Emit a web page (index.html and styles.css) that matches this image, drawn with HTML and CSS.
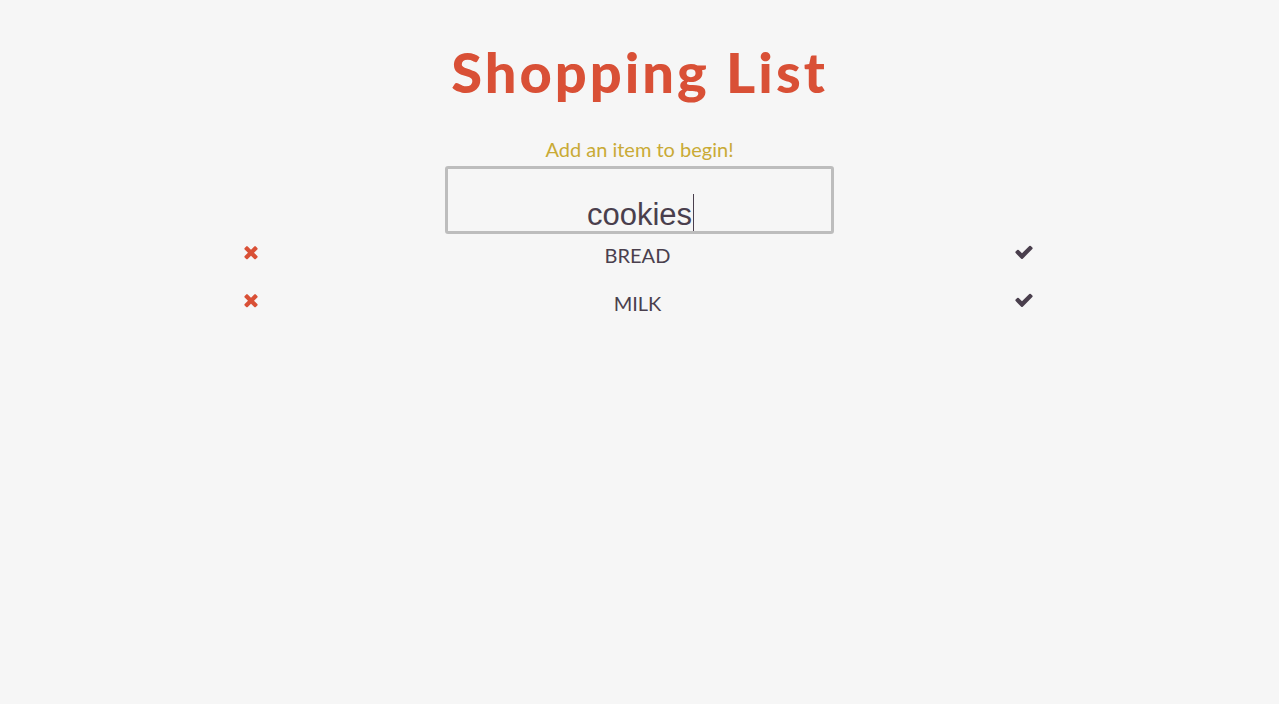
FILE: index.html
```html
<!DOCTYPE html>
<html>
<head>
<meta charset="utf-8">
<title>Shopping List</title>
<link rel="stylesheet" href="styles.css">
</head>
<body>
<main class="app">
  <h1 class="title">Shopping List</h1>
  <p class="hint">Add an item to begin!</p>
  <div class="entry-wrap">
    <input class="entry" type="text" value="cookies">
    <span class="caret"></span>
  </div>
  <ul class="list">
    <li class="row">
      <svg class="icon del" viewBox="0 0 1792 1792"><path d="M1490 1322q0 40-28 68l-136 136q-28 28-68 28t-68-28l-294-294-294 294q-28 28-68 28t-68-28l-136-136q-28-28-28-68t28-68l294-294-294-294q-28-28-28-68t28-68l136-136q28-28 68-28t68 28l294 294 294-294q28-28 68-28t68 28l136 136q28 28 28 68t-28 68l-294 294 294 294q28 28 28 68z"/></svg>
      <span class="name">BREAD</span>
      <svg class="icon done" viewBox="0 0 1792 1792"><path d="M1671 566q0 40-28 68l-724 724-136 136q-28 28-68 28t-68-28l-136-136-362-362q-28-28-28-68t28-68l136-136q28-28 68-28t68 28l294 295 656-657q28-28 68-28t68 28l136 136q28 28 28 68z"/></svg>
    </li>
    <li class="row">
      <svg class="icon del" viewBox="0 0 1792 1792"><path d="M1490 1322q0 40-28 68l-136 136q-28 28-68 28t-68-28l-294-294-294 294q-28 28-68 28t-68-28l-136-136q-28-28-28-68t28-68l294-294-294-294q-28-28-28-68t28-68l136-136q28-28 68-28t68 28l294 294 294-294q28-28 68-28t68 28l136 136q28 28 28 68t-28 68l-294 294 294 294q28 28 28 68z"/></svg>
      <span class="name">MILK</span>
      <svg class="icon done" viewBox="0 0 1792 1792"><path d="M1671 566q0 40-28 68l-724 724-136 136q-28 28-68 28t-68-28l-136-136-362-362q-28-28-28-68t28-68l136-136q28-28 68-28t68 28l294 295 656-657q28-28 68-28t68 28l136 136q28 28 28 68z"/></svg>
    </li>
  </ul>
</main>
</body>
</html>
```
FILE: styles.css
```css
html, body {
  margin: 0;
  padding: 0;
  background: #f6f6f6;
  height: 100%;
}
body {
  font-family: Lato, "Open Sans", sans-serif;
}
.app {
  display: flex;
  flex-direction: column;
  align-items: center;
  padding-top: 39px;
}
.title {
  margin: 0;
  font-family: Lato, sans-serif;
  font-weight: 900;
  font-size: 56px;
  line-height: 66px;
  letter-spacing: 3px;
  color: #d95036;
}
.hint {
  margin: 32px 0 5px;
  font-size: 20px;
  line-height: 24px;
  color: #c9aa35;
}
.entry-wrap {
  position: relative;
}
.entry {
  display: block;
  box-sizing: border-box;
  width: 389px;
  height: 68px;
  margin: 0;
  padding: 30px 10px 0;
  border: 3px solid #bdbdbd;
  border-radius: 3px;
  background: transparent;
  font-family: "Liberation Sans", Arial, sans-serif;
  font-size: 31px;
  color: #4a3f4d;
  text-align: center;
  outline: none;
}
.caret {
  position: absolute;
  left: 248px;
  top: 28px;
  width: 1px;
  height: 37px;
  background: #4a3f4d;
}
.list {
  list-style: none;
  margin: 1px 0 0;
  padding: 0;
  width: 800px;
  display: flex;
  flex-direction: column;
  gap: 8px;
}
.row {
  display: flex;
  align-items: center;
  justify-content: space-between;
  height: 40px;
  padding: 0 5px 0 1px;
}
.name {
  font-size: 20px;
  color: #4a3f4d;
}
.icon {
  width: 20px;
  height: 20px;
  margin-top: -6px;
}
.del { fill: #d95036; }
.done { fill: #4a3f4d; }
```
